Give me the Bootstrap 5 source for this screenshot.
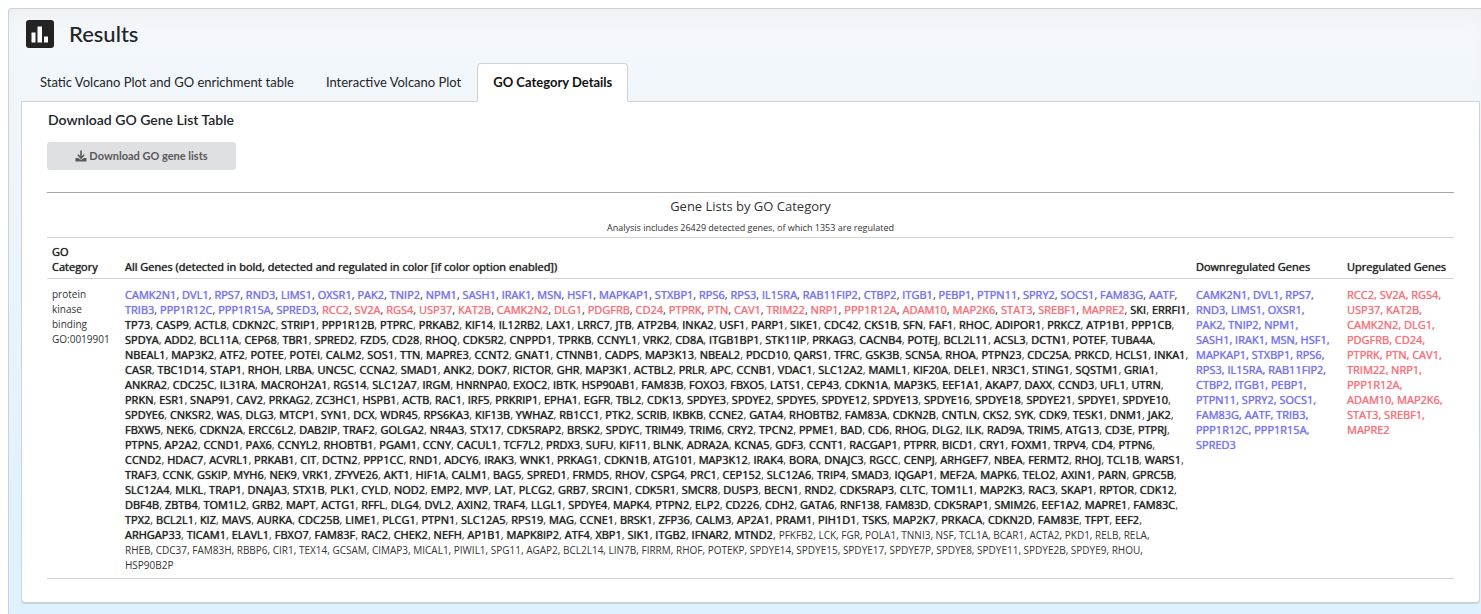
<!DOCTYPE html>
<html lang="en">
<head>
<meta charset="utf-8">
<meta name="viewport" content="width=device-width, initial-scale=1">
<title>Results</title>
<link href="https://cdn.jsdelivr.net/npm/bootstrap@5.3.0/dist/css/bootstrap.min.css" rel="stylesheet">
<style>
  body { font-family: Lato, sans-serif; color: #212529; background: #fff; }
  .results-box {
    margin: 8px 0 0 8px; padding: 0 1px 11px 12px; min-height: calc(100vh - 8px);
    border: 1px solid #c9d3dc; border-width: 1px 0 0 1px; border-top-left-radius: 4px;
    background: linear-gradient(#f4f8fc, #f1f6fa 100px, #ddf2fe 560px);
    box-shadow: inset 0 12px 20px -8px #ececee;
  }
  .results-head { padding: 11px 5px 15px; gap: 15px; }
  .results-head h1 { font-size: 22px; line-height: 28px; font-weight: 500; }
  .nav-tabs { border: 0; padding-left: 3px; }
  .nav-tabs .nav-link {
    font-size: 13px; line-height: 20px; padding: 8px 15px 9px; color: #212529; border-radius: 4px 4px 0 0;
  }
  .nav-tabs .nav-link.active { font-weight: 700; color: #111; border-color: #cfd3d6 #cfd3d6 #fff; }
  .result-panel {
    padding: 8px 25px 23px; background: #fff; border: 1px solid #cfd3d6;
    border-radius: 0 0 4px 4px; box-shadow: 0 1px 0 #c6d2da;
  }
  .result-panel h2 { font-size: 14px; line-height: 20px; font-weight: 600; padding-left: 1px; }
  .btn-download {
    width: 189px; height: 28px; margin-top: 12px; gap: 2px; font-size: 11px; line-height: 16px; font-weight: 700;
    color: #59595a; background: #dfe0e1; border: 0; border-radius: 3px;
  }
  .btn-download:hover { background: #d0d1d3; }
  .gene-table {
    table-layout: fixed; min-width: 1400px; margin: 22px 0 0; color: #333;
    font: 400 11px/15px "Open Sans", sans-serif; border-top: 1px solid #a8a8a8;
  }
  .gene-table td, .gene-table th {
    padding: 8px 0 6px 5px; color: #333; border-bottom: 1px solid #d3d3d3; vertical-align: top;
  }
  .gene-table .list-title { padding: 3px 0 0; font-weight: 400; text-align: center; }
  .list-title div { font-size: 13px; line-height: 20px; }
  .list-title p { font-size: 9px; line-height: 18px; margin: 3px 0 0; }
  .gene-table b, .gene-table .col-head th, .gene-table td.down, .gene-table td.up {
    font-weight: 500; color: #222; text-shadow: 0 0 1px currentColor;
  }
  .gene-table .col-head th { padding: 6px 0 4px 5px; vertical-align: bottom; }
  .gene-table .col-head th:first-child, .gene-table td:first-child { padding-right: 8px; }
  .gene-table td:first-child { font-size: 10px; }
  .gene-table td.down, .gene-table .down b { color: #7773e6; }
  .gene-table td.up, .gene-table .up b { color: #f0747e; }
  .undetected { font-size: 10px; }
  .gene-row { height: 15px; }
  .w-category { width: 73px; } .w-down { width: 151px; } .w-up { width: 112px; }
</style>
</head>
<body>
<main class="results-box">
  <header class="results-head d-flex align-items-center">
    <svg width="28" height="28" viewBox="0 0 28 28" aria-hidden="true">
      <rect width="28" height="28" rx="3" fill="#232323"/>
      <path d="M5.500 12.500h4v10h-4zM11.500 6.500h4.500v16h-4.500zM18 16.500h4v6h-4z" fill="#fff"/>
    </svg>
    <h1 class="m-0">Results</h1>
  </header>

  <ul class="nav nav-tabs">
    <li class="nav-item"><a class="nav-link" href="#static">Static Volcano Plot and GO enrichment table</a></li>
    <li class="nav-item"><a class="nav-link" href="#interactive">Interactive Volcano Plot</a></li>
    <li class="nav-item"><a class="nav-link active" aria-current="page" href="#details">GO Category Details</a></li>
  </ul>

  <section class="result-panel" id="details">
    <h2 class="mb-0">Download GO Gene List Table</h2>
    <button type="button" class="btn btn-download d-flex align-items-center justify-content-center p-0">
      <svg width="12" height="12" viewBox="0 0 12 12" aria-hidden="true">
        <path d="M6 0.500v7M2.800 4.800L6 8l3.200-3.200" fill="none" stroke="currentColor" stroke-width="1.600"/>
        <path d="M0.500 8h2.800L5 9.600h2L8.700 8h2.800v3.500h-11z" fill="currentColor"/>
      </svg>
      <span>Download GO gene lists</span>
    </button>

    <table class="gene-table w-100">
      <colgroup><col class="w-category"><col><col class="w-down"><col class="w-up"></colgroup>
      <thead>
        <tr><th class="list-title" colspan="4"><div>Gene Lists by GO Category</div><p>Analysis includes 26429 detected genes, of which 1353 are regulated</p></th></tr>
        <tr class="col-head">
          <th scope="col">GO Category</th>
          <th scope="col">All Genes (detected in bold, detected and regulated in color [if color option enabled])</th>
          <th scope="col">Downregulated Genes</th>
          <th scope="col">Upregulated Genes</th>
        </tr>
      </thead>
      <tbody>
        <tr>
          <td>protein kinase binding GO:0019901</td>
          <td id="all-genes"></td>
          <td class="down" id="down-genes"></td>
          <td class="up" id="up-genes"></td>
        </tr>
      </tbody>
    </table>
  </section>
</main>

<script src="https://cdn.jsdelivr.net/npm/bootstrap@5.3.0/dist/js/bootstrap.bundle.min.js"></script>
<script>
  const downRows = `CAMK2N1, DVL1, RPS7,
RND3, LIMS1, OXSR1,
PAK2, TNIP2, NPM1,
SASH1, IRAK1, MSN, HSF1,
MAPKAP1, STXBP1, RPS6,
RPS3, IL15RA, RAB11FIP2,
CTBP2, ITGB1, PEBP1,
PTPN11, SPRY2, SOCS1,
FAM83G, AATF, TRIB3,
PPP1R12C, PPP1R15A,
SPRED3`;
  const upRows = `RCC2, SV2A, RGS4,
USP37, KAT2B,
CAMK2N2, DLG1,
PDGFRB, CD24,
PTPRK, PTN, CAV1,
TRIM22, NRP1,
PPP1R12A,
ADAM10, MAP2K6,
STAT3, SREBF1,
MAPRE2`;
  const allRows = `CAMK2N1, DVL1, RPS7, RND3, LIMS1, OXSR1, PAK2, TNIP2, NPM1, SASH1, IRAK1, MSN, HSF1, MAPKAP1, STXBP1, RPS6, RPS3, IL15RA, RAB11FIP2, CTBP2, ITGB1, PEBP1, PTPN11, SPRY2, SOCS1, FAM83G, AATF,
TRIB3, PPP1R12C, PPP1R15A, SPRED3, RCC2, SV2A, RGS4, USP37, KAT2B, CAMK2N2, DLG1, PDGFRB, CD24, PTPRK, PTN, CAV1, TRIM22, NRP1, PPP1R12A, ADAM10, MAP2K6, STAT3, SREBF1, MAPRE2, SKI, ERRFI1,
TP73, CASP9, ACTL8, CDKN2C, STRIP1, PPP1R12B, PTPRC, PRKAB2, KIF14, IL12RB2, LAX1, LRRC7, JTB, ATP2B4, INKA2, USF1, PARP1, SIKE1, CDC42, CKS1B, SFN, FAF1, RHOC, ADIPOR1, PRKCZ, ATP1B1, PPP1CB,
SPDYA, ADD2, BCL11A, CEP68, TBR1, SPRED2, FZD5, CD28, RHOQ, CDK5R2, CNPPD1, TPRKB, CCNYL1, VRK2, CD8A, ITGB1BP1, STK11IP, PRKAG3, CACNB4, POTEJ, BCL2L11, ACSL3, DCTN1, POTEF, TUBA4A,
NBEAL1, MAP3K2, ATF2, POTEE, POTEI, CALM2, SOS1, TTN, MAPRE3, CCNT2, GNAT1, CTNNB1, CADPS, MAP3K13, NBEAL2, PDCD10, QARS1, TFRC, GSK3B, SCN5A, RHOA, PTPN23, CDC25A, PRKCD, HCLS1, INKA1,
CASR, TBC1D14, STAP1, RHOH, LRBA, UNC5C, CCNA2, SMAD1, ANK2, DOK7, RICTOR, GHR, MAP3K1, ACTBL2, PRLR, APC, CCNB1, VDAC1, SLC12A2, MAML1, KIF20A, DELE1, NR3C1, STING1, SQSTM1, GRIA1,
ANKRA2, CDC25C, IL31RA, MACROH2A1, RGS14, SLC12A7, IRGM, HNRNPA0, EXOC2, IBTK, HSP90AB1, FAM83B, FOXO3, FBXO5, LATS1, CEP43, CDKN1A, MAP3K5, EEF1A1, AKAP7, DAXX, CCND3, UFL1, UTRN,
PRKN, ESR1, SNAP91, CAV2, PRKAG2, ZC3HC1, HSPB1, ACTB, RAC1, IRF5, PRKRIP1, EPHA1, EGFR, TBL2, CDK13, SPDYE3, SPDYE2, SPDYE5, SPDYE12, SPDYE13, SPDYE16, SPDYE18, SPDYE21, SPDYE1, SPDYE10,
SPDYE6, CNKSR2, WAS, DLG3, MTCP1, SYN1, DCX, WDR45, RPS6KA3, KIF13B, YWHAZ, RB1CC1, PTK2, SCRIB, IKBKB, CCNE2, GATA4, RHOBTB2, FAM83A, CDKN2B, CNTLN, CKS2, SYK, CDK9, TESK1, DNM1, JAK2,
FBXW5, NEK6, CDKN2A, ERCC6L2, DAB2IP, TRAF2, GOLGA2, NR4A3, STX17, CDK5RAP2, BRSK2, SPDYC, TRIM49, TRIM6, CRY2, TPCN2, PPME1, BAD, CD6, RHOG, DLG2, ILK, RAD9A, TRIM5, ATG13, CD3E, PTPRJ,
PTPN5, AP2A2, CCND1, PAX6, CCNYL2, RHOBTB1, PGAM1, CCNY, CACUL1, TCF7L2, PRDX3, SUFU, KIF11, BLNK, ADRA2A, KCNA5, GDF3, CCNT1, RACGAP1, PTPRR, BICD1, CRY1, FOXM1, TRPV4, CD4, PTPN6,
CCND2, HDAC7, ACVRL1, PRKAB1, CIT, DCTN2, PPP1CC, RND1, ADCY6, IRAK3, WNK1, PRKAG1, CDKN1B, ATG101, MAP3K12, IRAK4, BORA, DNAJC3, RGCC, CENPJ, ARHGEF7, NBEA, FERMT2, RHOJ, TCL1B, WARS1,
TRAF3, CCNK, GSKIP, MYH6, NEK9, VRK1, ZFYVE26, AKT1, HIF1A, CALM1, BAG5, SPRED1, FRMD5, RHOV, CSPG4, PRC1, CEP152, SLC12A6, TRIP4, SMAD3, IQGAP1, MEF2A, MAPK6, TELO2, AXIN1, PARN, GPRC5B,
SLC12A4, MLKL, TRAP1, DNAJA3, STX1B, PLK1, CYLD, NOD2, EMP2, MVP, LAT, PLCG2, GRB7, SRCIN1, CDK5R1, SMCR8, DUSP3, BECN1, RND2, CDK5RAP3, CLTC, TOM1L1, MAP2K3, RAC3, SKAP1, RPTOR, CDK12,
DBF4B, ZBTB4, TOM1L2, GRB2, MAPT, ACTG1, RFFL, DLG4, DVL2, AXIN2, TRAF4, LLGL1, SPDYE4, MAPK4, PTPN2, ELP2, CD226, CDH2, GATA6, RNF138, FAM83D, CDK5RAP1, SMIM26, EEF1A2, MAPRE1, FAM83C,
TPX2, BCL2L1, KIZ, MAVS, AURKA, CDC25B, LIME1, PLCG1, PTPN1, SLC12A5, RPS19, MAG, CCNE1, BRSK1, ZFP36, CALM3, AP2A1, PRAM1, PIH1D1, TSKS, MAP2K7, PRKACA, CDKN2D, FAM83E, TFPT, EEF2,
ARHGAP33, TICAM1, ELAVL1, FBXO7, FAM83F, RAC2, CHEK2, NEFH, AP1B1, MAPK8IP2, ATF4, XBP1, SIK1, ITGB2, IFNAR2, MTND2, PFKFB2, LCK, FGR, POLA1, TNNI3, NSF, TCL1A, BCAR1, ACTA2, PKD1, RELB, RELA,
RHEB, CDC37, FAM83H, RBBP6, CIR1, TEX14, GCSAM, CIMAP3, MICAL1, PIWIL1, SPG11, AGAP2, BCL2L14, LIN7B, FIRRM, RHOF, POTEKP, SPDYE14, SPDYE15, SPDYE17, SPDYE7P, SPDYE8, SPDYE11, SPDYE2B, SPDYE9, RHOU,
HSP90B2P`;

  const names = text => text.split(/[\s,]+/).filter(Boolean);
  const down = new Set(names(downRows));
  const up = new Set(names(upRows));
  const all = names(allRows);
  const lastGene = all[all.length - 1];
  const firstUndetected = all.indexOf("PFKFB2");
  let index = 0;

  // Detected genes are bold, regulated ones coloured, the rest plain.
  function geneMarkup(name) {
    const comma = name === lastGene ? "" : ", ";
    if (index++ >= firstUndetected) return `<span class="undetected">${name}${comma}</span>`;
    const cls = down.has(name) ? "down" : up.has(name) ? "up" : "";
    return (cls ? `<span class="${cls}"><b>${name}</b></span>` : `<b>${name}</b>`) + comma;
  }
  const rows = (text, render) => text.split("\n").map(r => `<div class="gene-row">${render(r)}</div>`).join("");
  document.getElementById("all-genes").innerHTML = rows(allRows, r => names(r).map(geneMarkup).join(""));
  document.getElementById("down-genes").innerHTML = rows(downRows, r => r);
  document.getElementById("up-genes").innerHTML = rows(upRows, r => r);
</script>
</body>
</html>
